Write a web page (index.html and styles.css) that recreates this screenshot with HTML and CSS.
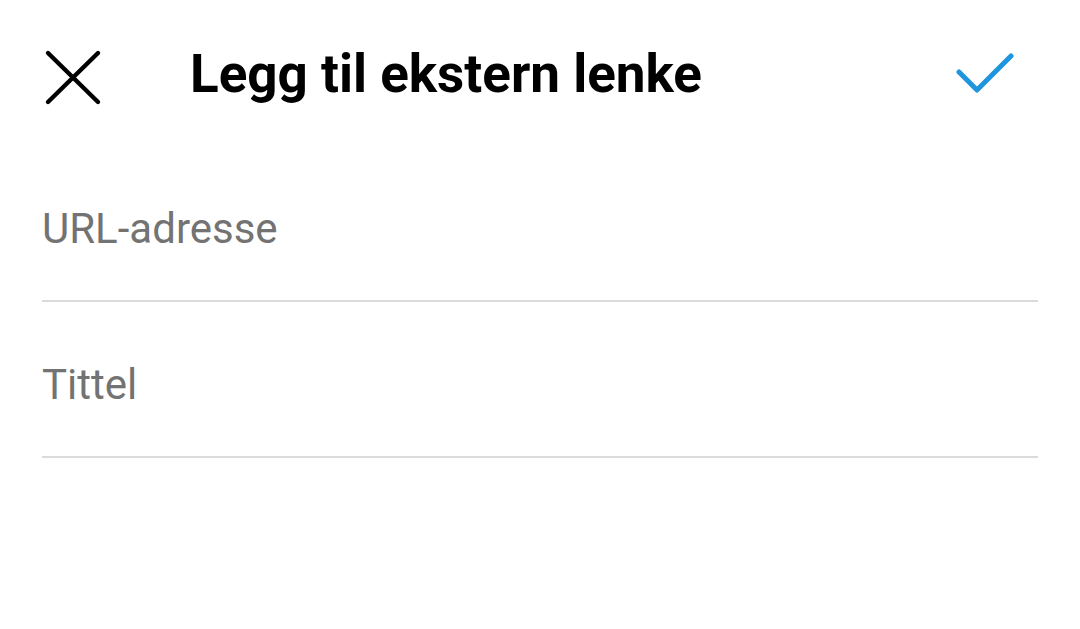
FILE: index.html
```html
<!DOCTYPE html>
<html lang="nb">

<head>
    <meta charset="UTF-8">
    <meta name="viewport" content="width=device-width, initial-scale=1.0">
    <title>Legg til ekstern lenke</title>
    <link rel="stylesheet" href="styles.css">
</head>

<body>
    <div class="Top_bar">
        <div class="Close_btn">
            <svg width="60" height="60" viewBox="0 0 60 60">
                <path d="M6 6 L56 55 M56 6 L6 55" stroke="#000" stroke-width="4.4" stroke-linecap="round" fill="none" />
            </svg>
        </div>
        <h1 class="title">Legg til ekstern lenke</h1>
        <div class="Done_btn">
            <svg width="60" height="60" viewBox="0 0 60 60">
                <path d="M5 20 L23 38 L57 4" stroke="#1f95dd" stroke-width="5" stroke-linecap="round" stroke-linejoin="round" fill="none" />
            </svg>
        </div>
    </div>
    <div class="Fields">
        <div class="field">
            <span class="placeholder">URL-adresse</span>
        </div>
        <div class="field">
            <span class="placeholder">Tittel</span>
        </div>
    </div>
</body>

</html>
```

FILE: styles.css
```css
body {
    margin: 0;
    background: #fff;
    font-family: Roboto, 'Noto Sans', sans-serif;
}

.Top_bar {
    display: flex;
    flex-direction: row;
    align-items: flex-start;
    height: 146px;
    padding: 0 66px 0 42px;
}

.Close_btn {
    margin-top: 47px;
    width: 60px;
    height: 60px;
}

.Done_btn {
    margin-top: 52px;
    margin-left: auto;
    width: 60px;
    height: 60px;
}

.title {
    margin: 42px 0 0 88px;
    font-size: 53px;
    line-height: 64px;
    font-weight: 700;
    color: #000;
}

.Fields {
    display: flex;
    flex-direction: column;
    padding: 0 42px;
}

.field {
    height: 109px;
    padding-bottom: 45px;
    border-bottom: 2px solid #dbdbdb;
    display: flex;
    align-items: flex-end;
}

.placeholder {
    display: block;
    font-size: 42px;
    line-height: 52px;
    color: #737373;
    margin-bottom: 0;
}
```
